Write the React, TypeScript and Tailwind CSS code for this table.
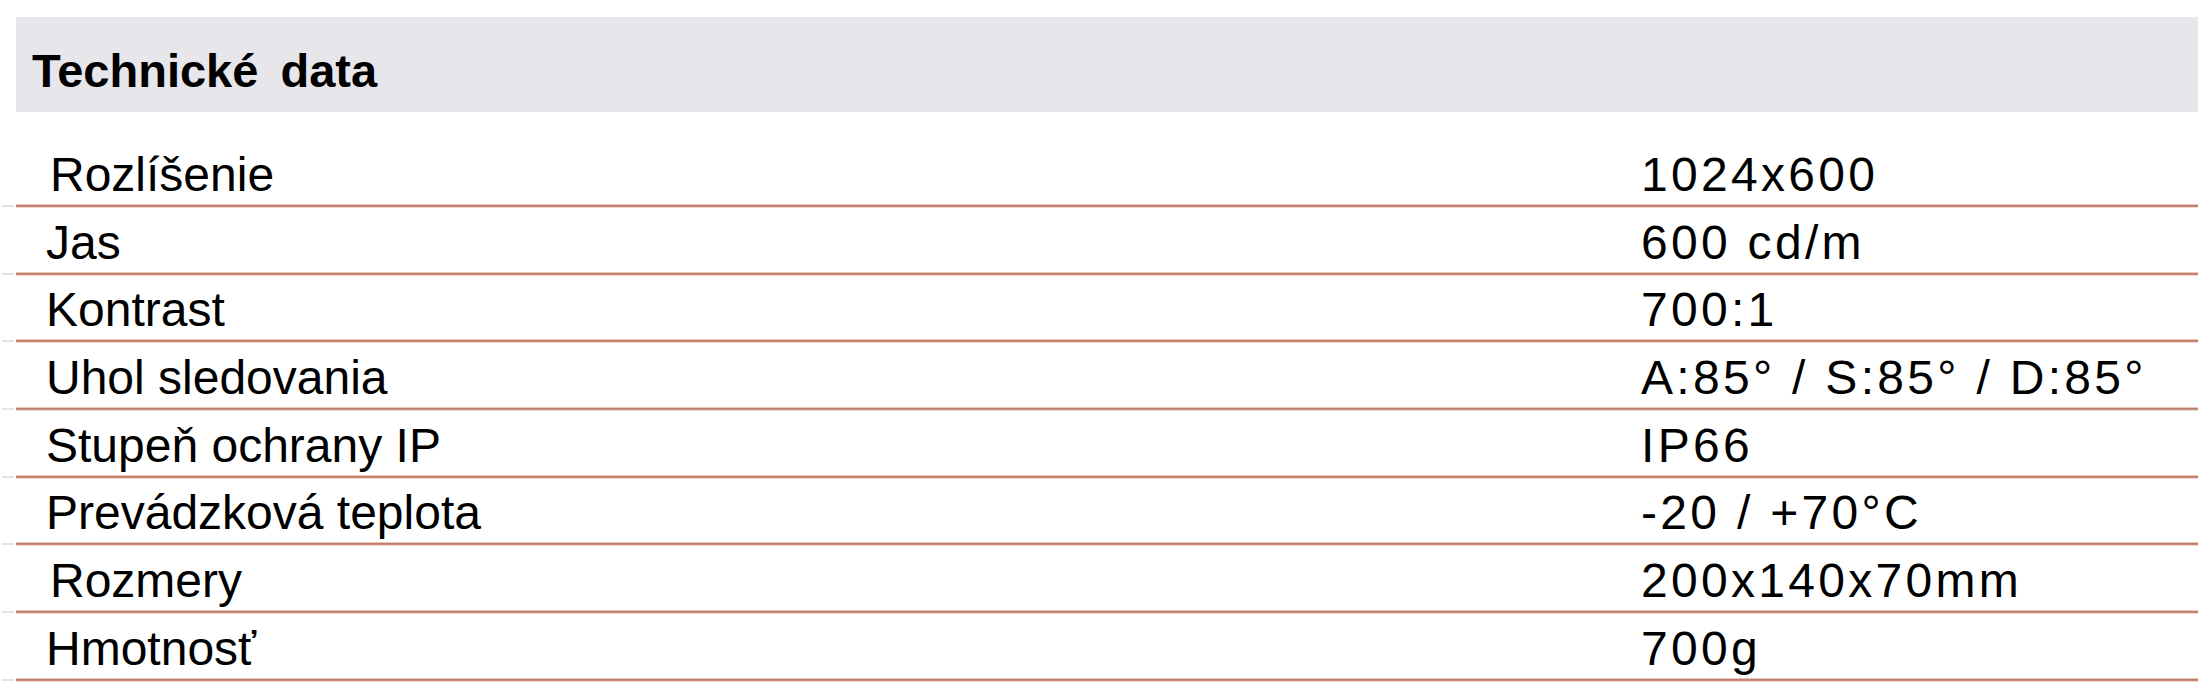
const specs = [
  { label: "Rozlíšenie", value: "1024x600", indent: true },
  { label: "Jas", value: "600 cd/m" },
  { label: "Kontrast", value: "700:1" },
  { label: "Uhol sledovania", value: "A:85° / S:85° / D:85°" },
  { label: "Stupeň ochrany IP", value: "IP66" },
  { label: "Prevádzková teplota", value: "-20 / +70°C" },
  { label: "Rozmery", value: "200x140x70mm", indent: true },
  { label: "Hmotnosť", value: "700g" },
];

function SpecRow({ label, value, indent, first }: { label: string; value: string; indent?: boolean; first?: boolean }) {
  return (
    <div className="relative">
      <div className={`grid grid-cols-[1625px_1fr] items-end pb-[5px] ${first ? "h-[92px]" : "h-[63.7px]"}`}>
        <span className={`${indent ? "pl-[34px]" : "pl-[30px]"} text-[48px] leading-none text-black`}>{label}</span>
        <span className="text-[48px] leading-none tracking-[3.3px] text-black">{value}</span>
      </div>
      <div className="flex h-[4px] flex-col">
        <div className="h-px bg-[#efc6b7]" />
        <div className="h-px bg-[#b77f6f]" />
        <div className="h-px bg-[#c38c7c]" />
        <div className="h-px bg-[#f3d6cb]" />
      </div>
      <div className="absolute bottom-[1px] -left-[14px] h-[2px] w-[12px] bg-[#e4e4e4]" />
    </div>
  );
}

export default function App() {
  return (
    <div className="h-[688px] w-full overflow-hidden bg-white font-['Liberation_Sans',Arial,sans-serif]">
      <div className="pl-[16px] pt-[17px]">
        <div className="h-[95px] bg-[#e7e6ea] pl-[16px] pt-[30px]">
          <h2 className="text-[47px] font-bold leading-none text-black [word-spacing:9px]">Technické data</h2>
        </div>
        {specs.map((s, i) => (
          <SpecRow key={s.label} label={s.label} value={s.value} indent={s.indent} first={i === 0} />
        ))}
      </div>
    </div>
  );
}
